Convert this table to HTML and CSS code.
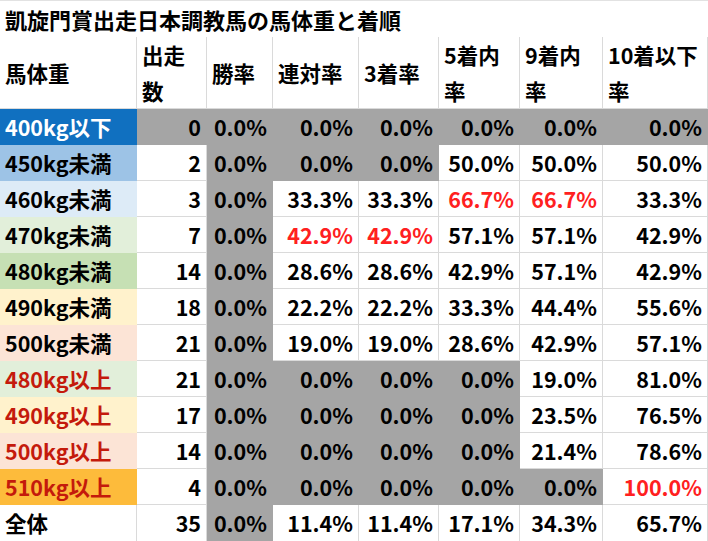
FILE: index.html
```html
<!DOCTYPE html>
<html lang="ja">
<head>
<meta charset="utf-8">
<title>凱旋門賞出走日本調教馬の馬体重と着順</title>
<link rel="stylesheet" href="styles.css">
</head>
<body>
<div class="sheet">
  <div class="title">凱旋門賞出走日本調教馬の馬体重と着順</div>

  <div class="h">馬体重</div>
  <div class="h">出走<br>数</div>
  <div class="h">勝率</div>
  <div class="h">連対率</div>
  <div class="h">3着率</div>
  <div class="h">5着内<br>率</div>
  <div class="h">9着内<br>率</div>
  <div class="h">10着以下<br>率</div>

  <div class="l f1 white">400kg以下</div>
  <div class="n g">0</div><div class="n g">0.0%</div><div class="n g">0.0%</div><div class="n g">0.0%</div><div class="n g">0.0%</div><div class="n g">0.0%</div><div class="n g">0.0%</div>

  <div class="l f2">450kg未満</div>
  <div class="n">2</div><div class="n g">0.0%</div><div class="n g">0.0%</div><div class="n g">0.0%</div><div class="n">50.0%</div><div class="n">50.0%</div><div class="n">50.0%</div>

  <div class="l f3">460kg未満</div>
  <div class="n">3</div><div class="n g">0.0%</div><div class="n">33.3%</div><div class="n">33.3%</div><div class="n r">66.7%</div><div class="n r">66.7%</div><div class="n">33.3%</div>

  <div class="l f4">470kg未満</div>
  <div class="n">7</div><div class="n g">0.0%</div><div class="n r">42.9%</div><div class="n r">42.9%</div><div class="n">57.1%</div><div class="n">57.1%</div><div class="n">42.9%</div>

  <div class="l f5">480kg未満</div>
  <div class="n">14</div><div class="n g">0.0%</div><div class="n">28.6%</div><div class="n">28.6%</div><div class="n">42.9%</div><div class="n">57.1%</div><div class="n">42.9%</div>

  <div class="l f6">490kg未満</div>
  <div class="n">18</div><div class="n g">0.0%</div><div class="n">22.2%</div><div class="n">22.2%</div><div class="n">33.3%</div><div class="n">44.4%</div><div class="n">55.6%</div>

  <div class="l f7">500kg未満</div>
  <div class="n">21</div><div class="n g">0.0%</div><div class="n">19.0%</div><div class="n">19.0%</div><div class="n">28.6%</div><div class="n">42.9%</div><div class="n">57.1%</div>

  <div class="l f4 dr">480kg以上</div>
  <div class="n">21</div><div class="n g">0.0%</div><div class="n g">0.0%</div><div class="n g">0.0%</div><div class="n g">0.0%</div><div class="n">19.0%</div><div class="n">81.0%</div>

  <div class="l f6 dr">490kg以上</div>
  <div class="n">17</div><div class="n g">0.0%</div><div class="n g">0.0%</div><div class="n g">0.0%</div><div class="n g">0.0%</div><div class="n">23.5%</div><div class="n">76.5%</div>

  <div class="l f7 dr">500kg以上</div>
  <div class="n">14</div><div class="n g">0.0%</div><div class="n g">0.0%</div><div class="n g">0.0%</div><div class="n g">0.0%</div><div class="n">21.4%</div><div class="n">78.6%</div>

  <div class="l f8 dr">510kg以上</div>
  <div class="n">4</div><div class="n g">0.0%</div><div class="n g">0.0%</div><div class="n g">0.0%</div><div class="n g">0.0%</div><div class="n g">0.0%</div><div class="n r">100.0%</div>

  <div class="l">全体</div>
  <div class="n">35</div><div class="n g">0.0%</div><div class="n">11.4%</div><div class="n">11.4%</div><div class="n">17.1%</div><div class="n">34.3%</div><div class="n">65.7%</div>
</div>
</body>
</html>
```

FILE: styles.css
```css
html, body {
  margin: 0;
  padding: 0;
  background: #ffffff;
}

.sheet {
  width: 708px;
  height: 541px;
  display: grid;
  grid-template-columns: 137px 70px 66px 86px 80px 81px 83px 105px;
  grid-template-rows: 36px 72px repeat(11, 36px) 37px;
  font-family: "Noto Sans CJK JP", "Noto Sans", sans-serif;
  font-weight: 700;
  font-size: 21.5px;
  color: #000000;
  border-top: 1px solid #e2e2e2;
  box-sizing: border-box;
}

.title {
  grid-column: 1 / -1;
  display: flex;
  align-items: center;
  padding-left: 5px;
  font-size: 22px;
  line-height: 1;
}

.h, .l, .n {
  box-sizing: border-box;
  border-right: 1px solid #dadada;
  border-bottom: 1px solid #dadada;
  display: flex;
  align-items: center;
  white-space: nowrap;
  line-height: 36px;
}

.h {
  padding-left: 5px;
}

.l {
  padding-left: 5px;
}

.n {
  justify-content: flex-end;
  padding-right: 5px;
}

.g {
  background: #a5a5a5;
  border-color: #a5a5a5;
}

.r {
  color: #ff2020;
}

.dr {
  color: #c41a0c;
}

.white {
  color: #ffffff;
}

.f1 { background: #1070c0; border-color: #1070c0; }
.f2 { background: #9dc3e6; border-color: #9dc3e6; }
.f3 { background: #ddebf7; border-color: #ddebf7; }
.f4 { background: #e2efda; border-color: #e2efda; }
.f5 { background: #c6e0b4; border-color: #c6e0b4; }
.f6 { background: #fff2cc; border-color: #fff2cc; }
.f7 { background: #fce4d6; border-color: #fce4d6; }
.f8 { background: #fdbb3b; border-color: #fdbb3b; }
```
